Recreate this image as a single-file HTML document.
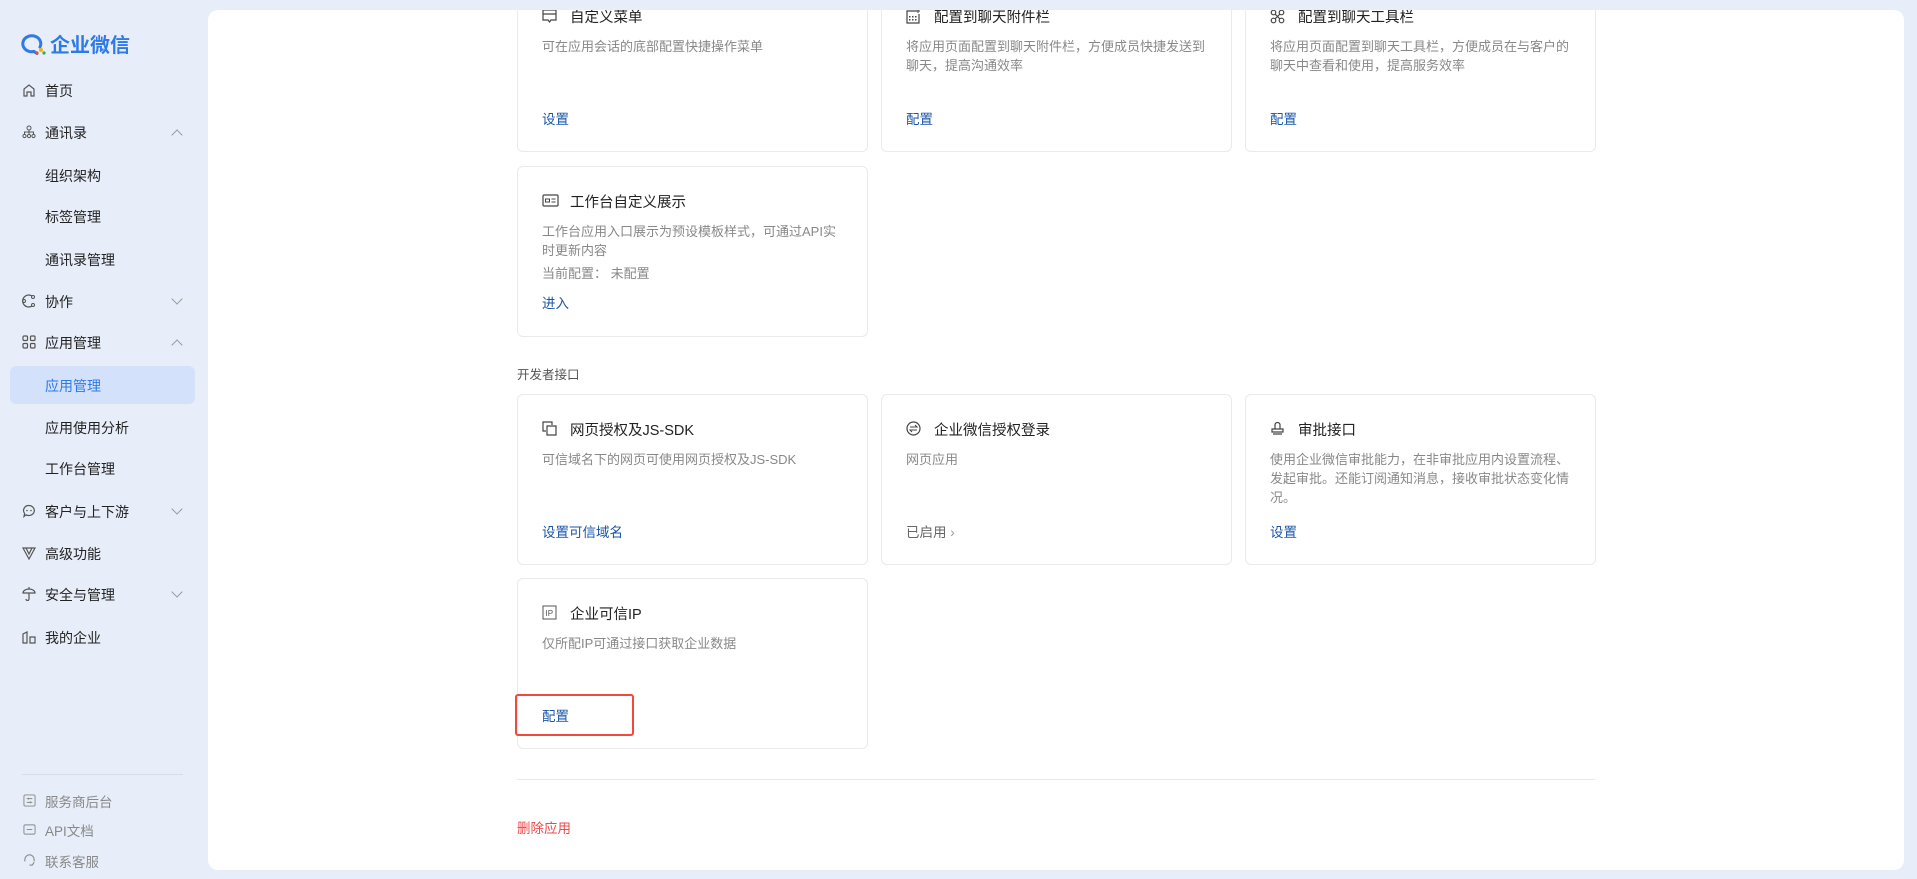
<!DOCTYPE html>
<html><head><meta charset="utf-8"><style>
*{margin:0;padding:0;box-sizing:border-box}
body{width:1917px;height:879px;background:#e8eef9;font-family:"Liberation Sans","Noto Sans CJK SC",sans-serif;position:relative;overflow:hidden;color:#222}
.abs{position:absolute;white-space:nowrap}
.logo{left:50px;top:29px;font-size:20px;font-weight:700;color:#2d7ae8}
.nav{font-size:14px;color:#222}
.ico{position:absolute;left:22px;width:14px;height:14px}
.chev{position:absolute;left:173px;width:8px;height:8px;border-right:1.3px solid #999;border-bottom:1.3px solid #999}
.active{position:absolute;left:10px;top:366px;width:185px;height:38px;background:#d3e2fa;border-radius:6px}
.main{position:absolute;left:208px;top:10px;width:1696px;height:860px;background:#fff;border-radius:10px}
.card{position:absolute;width:351px;border:1px solid #eaeaea;border-radius:6px;background:#fff}
.t{position:absolute;left:52px;font-size:14.5px;color:#222}
.ci{position:absolute;left:24px;width:15px;height:15px}
.d{position:absolute;left:24px;width:305px;font-size:13px;line-height:19px;color:#888;white-space:normal}
.l{position:absolute;left:24px;font-size:13.5px;color:#1b56a8}
.foot{font-size:13.5px;color:#888}
.topstrip{position:absolute;left:0;top:0;width:1917px;height:10px;background:#e8eef9;z-index:5}
</style></head><body>
<svg class="abs" style="left:20px;top:31px" width="28" height="26" viewBox="0 0 28 26"><path d="M20 16a9 8 0 1 0-6 4.5l3 2" fill="none" stroke="#2d7ae8" stroke-width="3" stroke-linecap="round"/><circle cx="21" cy="19" r="2" fill="#f4b400"/><circle cx="17" cy="22" r="1.6" fill="#e84c3d"/><circle cx="24" cy="22" r="1.6" fill="#34a853"/></svg>
<div class="abs logo">企业微信</div>

<div class="active"></div>
<svg class="ico" style="top:83px" viewBox="0 0 14 14"><path d="M2 13V6l5-4 5 4v7H9V9H5v4z" fill="none" stroke="#555" stroke-width="1.2"/></svg>
<div class="abs nav" style="left:45px;top:81px">首页</div>
<svg class="ico" style="top:125px" viewBox="0 0 14 14"><circle cx="7" cy="3" r="2" fill="none" stroke="#555"/><circle cx="2.5" cy="11" r="1.6" fill="none" stroke="#555"/><circle cx="7" cy="11" r="1.6" fill="none" stroke="#555"/><circle cx="11.5" cy="11" r="1.6" fill="none" stroke="#555"/><path d="M2.5 9V7h9v2M7 5v4" fill="none" stroke="#555"/></svg>
<div class="abs nav" style="left:45px;top:123px">通讯录</div>
<div class="chev" style="top:131px;transform:rotate(-135deg)"></div>
<div class="abs nav" style="left:45px;top:166px">组织架构</div>
<div class="abs nav" style="left:45px;top:207px">标签管理</div>
<div class="abs nav" style="left:45px;top:250px">通讯录管理</div>
<svg class="ico" style="top:294px" viewBox="0 0 14 14"><path d="M10 2a6 6 0 1 0 0 10" fill="none" stroke="#555" stroke-width="1.2"/><circle cx="11" cy="3" r="1.5" fill="none" stroke="#555"/><circle cx="11" cy="11" r="1.5" fill="none" stroke="#555"/><circle cx="2" cy="7" r="1.5" fill="none" stroke="#555"/></svg>
<div class="abs nav" style="left:45px;top:292px">协作</div>
<div class="chev" style="top:295px;transform:rotate(45deg)"></div>
<svg class="ico" style="top:335px" viewBox="0 0 14 14"><g fill="none" stroke="#555" stroke-width="1.2"><rect x="1" y="1" width="4.5" height="4.5" rx="1"/><rect x="8.5" y="1" width="4.5" height="4.5" rx="1"/><rect x="1" y="8.5" width="4.5" height="4.5" rx="1"/><rect x="8.5" y="8.5" width="4.5" height="4.5" rx="1"/></g></svg>
<div class="abs nav" style="left:45px;top:333px">应用管理</div>
<div class="chev" style="top:341px;transform:rotate(-135deg)"></div>
<div class="abs nav" style="left:45px;top:376px;color:#2d7ae8">应用管理</div>
<div class="abs nav" style="left:45px;top:418px">应用使用分析</div>
<div class="abs nav" style="left:45px;top:459px">工作台管理</div>
<svg class="ico" style="top:504px" viewBox="0 0 14 14"><path d="M7 1.5a5.5 5 0 1 1-3 9.3L2 12.5l.6-3A5 5 0 0 1 7 1.5z" fill="none" stroke="#555" stroke-width="1.2"/><circle cx="5" cy="6.5" r=".8" fill="#555"/><circle cx="9" cy="6.5" r=".8" fill="#555"/></svg>
<div class="abs nav" style="left:45px;top:502px">客户与上下游</div>
<div class="chev" style="top:505px;transform:rotate(45deg)"></div>
<svg class="ico" style="top:546px" viewBox="0 0 14 14"><path d="M1 2h12L7 13zM4 2l3 6 3-6" fill="none" stroke="#555" stroke-width="1.2"/></svg>
<div class="abs nav" style="left:45px;top:544px">高级功能</div>
<svg class="ico" style="top:587px" viewBox="0 0 14 14"><path d="M1 6a6 4 0 0 1 12 0zM7 6v6a1.5 1.5 0 0 1-3 0M7 0v2" fill="none" stroke="#555" stroke-width="1.2"/></svg>
<div class="abs nav" style="left:45px;top:585px">安全与管理</div>
<div class="chev" style="top:588px;transform:rotate(45deg)"></div>
<svg class="ico" style="top:630px" viewBox="0 0 14 14"><path d="M1 13V4l4-2v11zM8 13V7h5v6z" fill="none" stroke="#555" stroke-width="1.2"/></svg>
<div class="abs nav" style="left:45px;top:628px">我的企业</div>

<div class="abs" style="left:22px;top:774px;width:161px;height:1px;background:#d6dce8"></div>
<svg class="ico" style="top:794px;left:23px;width:13px;height:13px" viewBox="0 0 14 14"><rect x="1" y="1" width="12" height="12" rx="1.5" fill="none" stroke="#888"/><path d="M4 5h6M4 9h6M6 4v2M8 8v2" stroke="#888"/></svg>
<div class="abs foot" style="left:45px;top:791px">服务商后台</div>
<svg class="ico" style="top:823px;left:23px;width:13px;height:13px" viewBox="0 0 14 14"><rect x="1" y="2" width="12" height="10" rx="1.5" fill="none" stroke="#888"/><path d="M4 7h6" stroke="#888"/></svg>
<div class="abs foot" style="left:45px;top:820px">API文档</div>
<svg class="ico" style="top:853px;left:23px;width:13px;height:13px" viewBox="0 0 14 14"><path d="M2 9V7a5 5 0 0 1 10 0v2M7 13h3l2-3" fill="none" stroke="#888" stroke-width="1.2"/></svg>
<div class="abs foot" style="left:45px;top:851px">联系客服</div>

<div class="main"></div>

<!-- row1 -->
<div class="card" style="left:517px;top:-20px;height:172px">
<svg class="ci" style="top:28px" viewBox="0 0 15 15"><path d="M1 1h13v10H9l-1.5 2L6 11H1zM1 5h13" fill="none" stroke="#444" stroke-width="1.2"/></svg>
<div class="t" style="top:25px">自定义菜单</div>
<div class="d" style="top:56px">可在应用会话的底部配置快捷操作菜单</div>
<div class="l" style="top:127px">设置</div></div>
<div class="card" style="left:881px;top:-20px;height:172px">
<svg class="ci" style="top:28px" viewBox="0 0 15 15"><path d="M11 2H1v12h12V5" fill="none" stroke="#444" stroke-width="1.2"/><path d="M12 0v4M10 2h4" stroke="#444"/><g fill="#444"><rect x="3" y="7" width="1.5" height="1.5"/><rect x="6" y="7" width="1.5" height="1.5"/><rect x="9" y="7" width="1.5" height="1.5"/><rect x="3" y="10" width="1.5" height="1.5"/><rect x="6" y="10" width="1.5" height="1.5"/><rect x="9" y="10" width="1.5" height="1.5"/></g></svg>
<div class="t" style="top:25px">配置到聊天附件栏</div>
<div class="d" style="top:56px">将应用页面配置到聊天附件栏，方便成员快捷发送到聊天，提高沟通效率</div>
<div class="l" style="top:127px">配置</div></div>
<div class="card" style="left:1245px;top:-20px;height:172px">
<svg class="ci" style="top:28px" viewBox="0 0 15 15"><g fill="none" stroke="#444" stroke-width="1.2"><circle cx="3.5" cy="3.5" r="2.3"/><circle cx="11.5" cy="3.5" r="2.3"/><circle cx="3.5" cy="11.5" r="2.3"/><circle cx="11.5" cy="11.5" r="2.3"/><path d="M5 5l5 5M10 5l-5 5"/></g></svg>
<div class="t" style="top:25px">配置到聊天工具栏</div>
<div class="d" style="top:56px">将应用页面配置到聊天工具栏，方便成员在与客户的聊天中查看和使用，提高服务效率</div>
<div class="l" style="top:127px">配置</div></div>
<div class="topstrip"></div>

<!-- row2 -->
<div class="card" style="left:517px;top:166px;height:171px">
<svg class="ci" style="top:26px;width:17px" viewBox="0 0 17 15"><rect x="1" y="2" width="15" height="11" rx="1" fill="none" stroke="#444" stroke-width="1.2"/><rect x="3.5" y="6" width="4" height="3" fill="none" stroke="#444"/><path d="M9.5 6h4M9.5 9h4" stroke="#444"/></svg>
<div class="t" style="top:24px">工作台自定义展示</div>
<div class="d" style="top:55px">工作台应用入口展示为预设模板样式，可通过API实时更新内容</div>
<div class="d" style="top:97px">当前配置：&nbsp;未配置</div>
<div class="l" style="top:125px">进入</div></div>

<div class="abs" style="left:517px;top:364px;font-size:12.5px;color:#555">开发者接口</div>

<!-- row3 -->
<div class="card" style="left:517px;top:394px;height:171px">
<svg class="ci" style="top:26px" viewBox="0 0 15 15"><path d="M4 10H1V1h9v3M5 5h9v9H5z" fill="none" stroke="#444" stroke-width="1.2"/></svg>
<div class="t" style="top:24px">网页授权及JS-SDK</div>
<div class="d" style="top:55px">可信域名下的网页可使用网页授权及JS-SDK</div>
<div class="l" style="top:126px">设置可信域名</div></div>
<div class="card" style="left:881px;top:394px;height:171px">
<svg class="ci" style="top:26px" viewBox="0 0 15 15"><circle cx="7.5" cy="7.5" r="6.5" fill="none" stroke="#444" stroke-width="1.2"/><path d="M4 6h7l-2-2M11 9H4l2 2" fill="none" stroke="#444"/></svg>
<div class="t" style="top:24px">企业微信授权登录</div>
<div class="d" style="top:55px">网页应用</div>
<div class="l" style="top:126px;color:#666">已启用 <span style="color:#999">›</span></div></div>
<div class="card" style="left:1245px;top:394px;height:171px">
<svg class="ci" style="top:26px" viewBox="0 0 15 15"><path d="M5 8V4a2.5 2.5 0 0 1 5 0v4M2 8h11v3H2zM3 13h9" fill="none" stroke="#444" stroke-width="1.2"/></svg>
<div class="t" style="top:24px">审批接口</div>
<div class="d" style="top:55px">使用企业微信审批能力，在非审批应用内设置流程、发起审批。还能订阅通知消息，接收审批状态变化情况。</div>
<div class="l" style="top:126px">设置</div></div>

<!-- row4 -->
<div class="card" style="left:517px;top:578px;height:171px">
<svg class="ci" style="top:26px" viewBox="0 0 15 15"><rect x="1" y="1" width="13" height="13" fill="none" stroke="#555"/><text x="3.5" y="11" font-size="8" fill="#555" font-family="Liberation Sans">IP</text></svg>
<div class="t" style="top:24px">企业可信IP</div>
<div class="d" style="top:55px">仅所配IP可通过接口获取企业数据</div>
<div class="l" style="top:126px">配置</div></div>
<div class="abs" style="left:515px;top:694px;width:119px;height:42px;border:2.5px solid #ee4b3e;border-radius:3px"></div>

<div class="abs" style="left:517px;top:779px;width:1078px;height:1px;background:#e8e8e8"></div>
<div class="abs" style="left:517px;top:817px;font-size:13.5px;color:#f0484a">删除应用</div>
</body></html>
